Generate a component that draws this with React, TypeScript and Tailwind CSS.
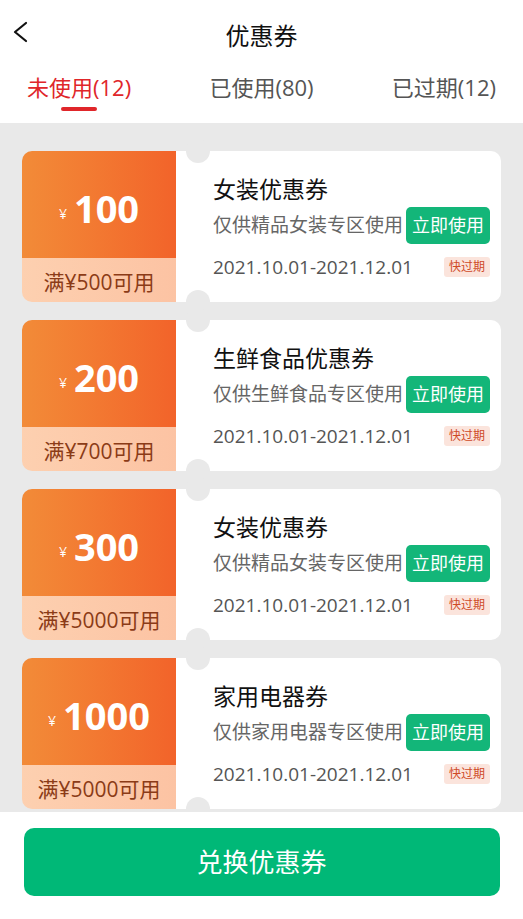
const coupons = [
	{ amount: "100", limit: "满¥500可用", title: "女装优惠券", desc: "仅供精品女装专区使用" },
	{ amount: "200", limit: "满¥700可用", title: "生鲜食品优惠券", desc: "仅供生鲜食品专区使用" },
	{ amount: "300", limit: "满¥5000可用", title: "女装优惠券", desc: "仅供精品女装专区使用" },
	{ amount: "1000", limit: "满¥5000可用", title: "家用电器券", desc: "仅供家用电器专区使用" },
];

const tabs = [
	{ label: "未使用(12)", active: true },
	{ label: "已使用(80)", active: false },
	{ label: "已过期(12)", active: false },
];

function CouponCard({ amount, limit, title, desc }: (typeof coupons)[number]) {
	return (
		<div className="relative flex h-[151px] shrink-0">
			<div className="flex w-[154px] flex-col overflow-hidden rounded-l-[10px]">
				<div className="flex h-[107px] items-center justify-center bg-gradient-to-r from-[#f28b38] to-[#f2632a] pt-[6px] text-white">
					<span className="mr-[7px] mt-[12px] text-[14px]">¥</span>
					<span className="text-[38px] font-bold leading-none">{amount}</span>
				</div>
				<div className="flex h-[44px] items-center justify-center bg-gradient-to-r from-[#fdd0b0] to-[#fcc3a3] pt-[5px] text-[21px] text-[#8b3b17]">
					{limit}
				</div>
			</div>
			<div className="flex flex-1 flex-col rounded-r-[10px] bg-white pl-[37px] pr-[11px] pt-[22px]">
				<div className="text-[23px] leading-[32px] text-[#111]">{title}</div>
				<div className="mt-[2px] flex h-[37px] items-center justify-between">
					<span className="text-[19px] text-[#666]">{desc}</span>
					<button className="h-[37px] rounded-[5px] bg-[#13b679] px-[6px] text-[18px] text-white">
						立即使用
					</button>
				</div>
				<div className="mt-[13px] flex h-[20px] items-center justify-between">
					<span className="text-[19px] text-[#555]">2021.10.01-2021.12.01</span>
					<span className="rounded-[3px] bg-[#fbe4dc] px-[5px] text-[12px] leading-[20px] text-[#cf4a28]">
						快过期
					</span>
				</div>
			</div>
			<div className="absolute left-[164px] top-[-12px] h-6 w-6 rounded-full bg-[#e9e9e9]" />
			<div className="absolute bottom-[-12px] left-[164px] h-6 w-6 rounded-full bg-[#e9e9e9]" />
		</div>
	);
}

export default function App() {
	return (
		<div
			className="flex h-[919px] w-[523px] flex-col overflow-hidden bg-white"
			style={{ fontFamily: '"Open Sans", "Noto Sans CJK SC", sans-serif' }}
		>
			<header className="relative flex h-[72px] shrink-0 items-center justify-center">
				<svg
					className="absolute left-[10px] top-[20px]"
					width="24"
					height="24"
					viewBox="0 0 24 24"
					fill="none"
					stroke="#111"
					strokeWidth="2.2"
					strokeLinecap="round"
					strokeLinejoin="round"
				>
					<polyline points="16,3 5,12 16,21" />
				</svg>
				<h1 className="text-[24px] text-[#111]">优惠券</h1>
			</header>

			<nav className="flex h-[51px] shrink-0 items-start justify-between px-[27px]">
				{tabs.map((t) => (
					<div key={t.label} className="flex flex-col items-center">
						<span className={`text-[22px] leading-[30px] ${t.active ? "text-[#e0262a]" : "text-[#555]"}`}>
							{t.label}
						</span>
						{t.active ? (
							<span className="mt-[5px] h-[4px] w-[36px] rounded-full bg-[#e0262a]" />
						) : null}
					</div>
				))}
			</nav>

			<main className="flex flex-1 flex-col gap-[18px] overflow-hidden bg-[#e9e9e9] px-[22px] pt-[28px]">
				{coupons.map((c, i) => (
					<CouponCard key={i} {...c} />
				))}
			</main>

			<footer className="flex h-[107px] shrink-0 items-start justify-center bg-white pt-[16px]">
				<button className="h-[68px] w-[476px] rounded-[10px] bg-[#00b877] text-[26px] text-white">
					兑换优惠券
				</button>
			</footer>
		</div>
	);
}
